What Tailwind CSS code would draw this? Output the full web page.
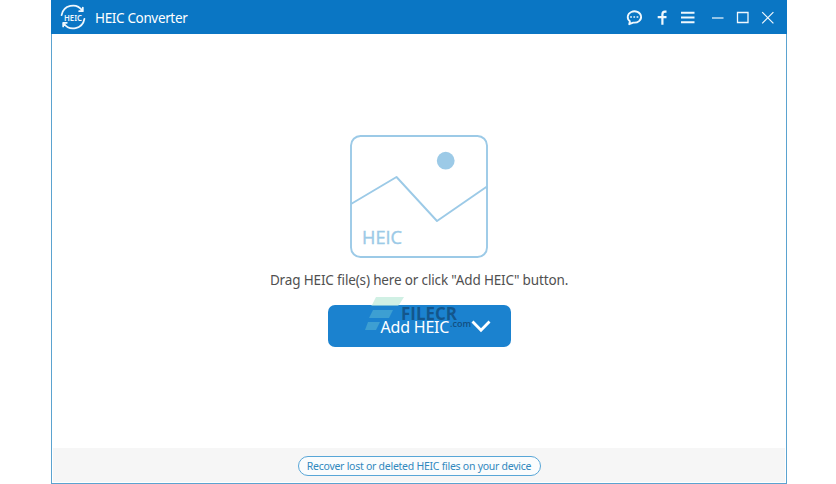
<!DOCTYPE html>
<html lang="en">
<head>
<meta charset="utf-8">
<title>HEIC Converter</title>
<script src="https://cdn.jsdelivr.net/npm/@tailwindcss/browser@4"></script>
</head>
<body class="bg-white h-[484px] w-[836px] overflow-hidden font-['Noto_Sans',sans-serif]">
<main class="ml-[51px] w-[736px] h-[484px] flex flex-col border-x border-b border-[#5ba3d0] bg-white">
  <header class="h-[34px] -mx-px shrink-0 bg-[#0a76c4] flex items-center justify-between pl-[8px] pr-[12px] text-white">
    <div class="flex items-center">
      <svg class="w-[28px] h-[28px]" viewBox="0 0 28 28" fill="none" stroke="#eef7fd" stroke-width="1.8" stroke-linecap="round" stroke-linejoin="round">
        <path d="M2.6 12.2A11.4 11.4 0 0 1 23.2 7.6M23.8 4.6v3.6h-3.6M25.4 15.8A11.4 11.4 0 0 1 4.8 20.4M4.2 23.4v-3.6h3.6"/>
        <text x="5" y="17.5" textLength="18" lengthAdjust="spacingAndGlyphs" fill="#eef7fd" stroke="none" font-size="8.5" font-weight="600">HEIC</text>
      </svg>
      <h1 class="ml-[8px] mt-[2px] text-[13.5px] leading-[20px] tracking-[-0.35px] whitespace-nowrap">HEIC Converter</h1>
    </div>
    <svg class="w-[150px] h-[34px]" viewBox="0 0 150 34" fill="none" stroke="#f0f8fd">
      <path d="M4.9 21.2A6.7 5.7 0 1 1 8.2 22.6L4.2 24.2Z" stroke-width="1.8" stroke-linejoin="round"/>
      <path d="M5.2 17h1.7M8.4 17h1.7M11.6 17h1.7" stroke-width="1.7"/>
      <path d="M41.5 11.7h-1.6q-2.5 0-2.5 2.7v10.3M32.7 17.2h8.8" stroke-width="2.2"/>
      <path d="M56 12.8h13.5M56 17.5h13.5M56 22.2h13.5" stroke-width="2"/>
      <path d="M87 18h11.5" stroke-width="1.2"/>
      <path d="M112.5 12.5h10.5v10h-10.5z" stroke-width="1.3"/>
      <path d="M137.2 12.2l11.2 11.2M148.4 12.2l-11.2 11.2" stroke-width="1.2"/>
    </svg>
  </header>
  <section class="flex-1 flex flex-col items-center pt-[101px]">
    <svg class="w-[138px] h-[123px] shrink-0" viewBox="0 0 138 123" fill="none" stroke="#9ccae7" stroke-width="1.9">
      <rect x="1" y="1" width="136" height="121" rx="9.5"/>
      <path d="M1 69L46.5 42 87 86 137 51.5" stroke-linejoin="round"/>
      <circle cx="95.7" cy="25.7" r="8.9" fill="#9ccae7" stroke="none"/>
      <text x="12" y="109" textLength="40" lengthAdjust="spacingAndGlyphs" fill="#9ccae7" stroke-width=".4" font-size="18.5" font-family="Open Sans, sans-serif">HEIC</text>
    </svg>
    <p class="mt-[12px] h-[20px] text-[13.5px] leading-[20px] tracking-[-0.15px] text-[#505050] whitespace-nowrap">Drag HEIC file(s) here or click "Add HEIC" button.</p>
    <div class="relative mt-[15px] w-[183px] h-[42px] flex">
      <button class="w-full h-full rounded-[7px] bg-[#1b82cf] text-white flex items-center pl-[53px] text-[16px]">
        <span class="relative z-10 w-[70px] mt-[2px] tracking-[-0.2px] whitespace-nowrap text-left">Add HEIC</span>
        <svg class="ml-[20px] w-[20px] h-[14px]" viewBox="0 0 20 14" fill="none" stroke="white" stroke-width="2.8"><path d="M1.5 2.5L10 11.3 18.5 2.5"/></svg>
      </button>
      <div class="absolute left-[36px] -top-[9px] w-[110px] h-[36px] pointer-events-none">
        <svg class="w-[110px] h-[36px]" viewBox="0 0 110 36">
          <path d="M12 1H40L35 9H8Z" fill="#d0f0e4"/>
          <path d="M8 9H35L34 10H7Z" fill="#77bdd8"/>
          <path d="M9 14H29L25 22H5Z" fill="#3d9fd2"/>
          <path d="M4 26H16L12 34H1Z" fill="#3d9fd2"/>
          <text x="37" y="24" textLength="56" lengthAdjust="spacingAndGlyphs" font-family="Open Sans, sans-serif" font-size="17.5" font-weight="700" fill="#124e80" fill-opacity=".85">FILECR</text>
          <text x="86" y="31" textLength="21" lengthAdjust="spacingAndGlyphs" font-family="Open Sans, sans-serif" font-size="9.5" font-weight="600" fill="#124e80">.com</text>
        </svg>
      </div>
    </div>
  </section>
  <footer class="h-[34px] mx-px mb-px shrink-0 bg-[#f6f6f6] flex justify-center pt-[8px]">
    <a class="w-[243px] h-[20px] rounded-full border border-[#58a6d7] bg-[#fafcfd] text-[#3188bd] text-[10.5px] leading-[19px] tracking-[-0.26px] text-center whitespace-nowrap">Recover lost or deleted HEIC files on your device</a>
  </footer>
</main>
</body>
</html>
